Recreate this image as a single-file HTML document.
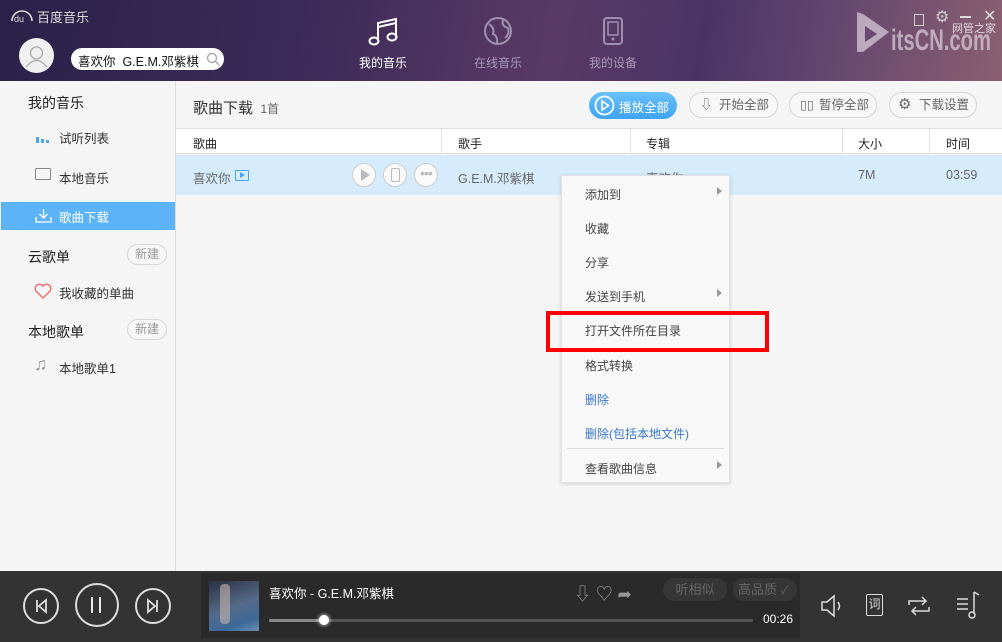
<!DOCTYPE html>
<html><head><meta charset="utf-8"><style>
*{margin:0;padding:0;box-sizing:border-box}
body{width:1002px;height:642px;overflow:hidden;font-family:"Liberation Sans","Noto Sans CJK SC",sans-serif;font-size:12px;color:#333;background:#f5f5f5;position:relative}
.abs{position:absolute}
#hdr{left:0;top:0;width:1002px;height:81px;background:linear-gradient(100deg,#2a2148 0%,#3b2a58 30%,#5a3a64 55%,#4a3466 70%,#6a4a70 85%,#8a6070 100%)}
#side{left:0;top:81px;width:176px;height:490px;background:#f5f5f5;border-right:1px solid #dcdcdc}
.t{position:absolute;white-space:nowrap}
.btn{position:absolute;height:26px;border:1px solid #d6d6d6;border-radius:13px;background:#f7f7f7;color:#666;font-size:12.5px;line-height:24px}
#bot{left:0;top:571px;width:1002px;height:71px;background:#333}
.circ{position:absolute;border:2px solid #ddd;border-radius:50%}
.mi{position:absolute;left:585px;font-size:12px;color:#444}
</style></head><body>
<div id="hdr" class="abs"></div>
<svg class="abs" style="left:9px;top:9px" width="26" height="14" viewBox="0 0 26 14"><path d="M3 12 A9 9 0 0 1 23 12" fill="none" stroke="#ddd" stroke-width="1.6"/><text x="5" y="13" font-size="9" fill="#ddd" font-family="Liberation Sans">du</text></svg>
<div class="t" style="left:37px;top:7px;color:#ddd;font-size:13px">百度音乐</div>
<div class="abs" style="left:19px;top:38px;width:35px;height:35px;border-radius:50%;background:#f0f0f0"></div>
<svg class="abs" style="left:19px;top:38px" width="35" height="35"><circle cx="17.5" cy="15" r="6" fill="none" stroke="#aaa" stroke-width="1.3"/><path d="M7 29 Q17.5 16 28 29" fill="none" stroke="#aaa" stroke-width="1.3"/></svg>
<div class="abs" style="left:71px;top:48px;width:153px;height:22px;border-radius:11px;background:#fff"></div>
<div class="t" style="left:78px;top:51px;font-size:12.5px;color:#111">喜欢你&nbsp; G.E.M.邓紫棋</div>
<svg class="abs" style="left:206px;top:52px" width="14" height="14"><circle cx="6" cy="6" r="4.5" fill="none" stroke="#aaa" stroke-width="1.4"/><path d="M9.5 9.5 L13 13" stroke="#aaa" stroke-width="1.5"/></svg>
<svg class="abs" style="left:368px;top:17px" width="32" height="30"><path d="M10 24 V6 L28 2 V20" fill="none" stroke="#fff" stroke-width="2"/><path d="M10 10 L28 6" stroke="#fff" stroke-width="2"/><ellipse cx="6" cy="24" rx="4.5" ry="3.5" fill="none" stroke="#fff" stroke-width="2"/><ellipse cx="24" cy="20" rx="4.5" ry="3.5" fill="none" stroke="#fff" stroke-width="2"/></svg>
<div class="t" style="left:359px;top:54px;color:#fff;font-size:12px">我的音乐</div>
<svg class="abs" style="left:483px;top:16px" width="30" height="30"><circle cx="15" cy="15" r="13" fill="none" stroke="#a090b0" stroke-width="2"/><path d="M6 8 Q12 12 10 18 Q15 20 14 27 M20 4 Q18 10 25 12 Q27 18 22 22" fill="none" stroke="#a090b0" stroke-width="2"/></svg>
<div class="t" style="left:474px;top:54px;color:#a898b8;font-size:12px">在线音乐</div>
<svg class="abs" style="left:603px;top:17px" width="22" height="28"><rect x="1" y="1" width="18" height="26" rx="3" fill="none" stroke="#a090b0" stroke-width="2"/><rect x="5" y="5" width="10" height="13" fill="none" stroke="#a090b0" stroke-width="1.5"/><circle cx="10" cy="22" r="1.5" fill="#a090b0"/></svg>
<div class="t" style="left:589px;top:54px;color:#a898b8;font-size:12px">我的设备</div>
<!-- watermark -->
<svg class="abs" style="left:853px;top:10px" width="140" height="46"><path d="M4 2 L4 42 L10 42 L36 22 L10 4 Z" fill="rgba(215,200,215,.75)"/><path d="M12 16 L24 24 L12 32 Z" fill="#6a4a70"/><text x="38" y="40" font-family="Liberation Sans" font-weight="bold" font-size="30" fill="rgba(215,200,215,.75)" textLength="100" lengthAdjust="spacingAndGlyphs">itsCN.com</text></svg>
<div class="t" style="left:952px;top:20px;color:#e0d8e0;font-size:11px">网管之家</div>
<div class="abs" style="left:914px;top:14px;width:10px;height:12px;border:1.2px solid #ccc"></div>
<div class="t" style="left:935px;top:7px;color:#ccc;font-size:16px">⚙</div>
<div class="abs" style="left:960px;top:16px;width:11px;height:1.5px;background:#ddd"></div>
<div class="t" style="left:983px;top:6px;color:#ddd;font-size:16px">✕</div>
<!-- sidebar -->
<div id="side" class="abs"></div>
<div class="t" style="left:28px;top:93px;font-size:14px;color:#222">我的音乐</div>
<div class="abs" style="left:36px;top:137px;width:3px;height:6px;background:#4aa6ef"></div>
<div class="abs" style="left:41px;top:139px;width:3px;height:4px;background:#4aa6ef"></div>
<div class="abs" style="left:46px;top:140px;width:3px;height:3px;background:#4aa6ef"></div>
<div class="t" style="left:59px;top:128px;font-size:12.5px">试听列表</div>
<div class="abs" style="left:35px;top:168px;width:16px;height:12px;border:1.3px solid #888;border-radius:1px"></div>
<div class="t" style="left:59px;top:168px;font-size:12.5px">本地音乐</div>
<div class="abs" style="left:1px;top:202px;width:174px;height:28px;background:#5cb3f8"></div>
<svg class="abs" style="left:35px;top:208px" width="17" height="15"><path d="M8.5 1 V10 M4.5 6 L8.5 10 L12.5 6 M1 9 V14 H16 V9" fill="none" stroke="#fff" stroke-width="1.3"/></svg>
<div class="t" style="left:59px;top:207px;font-size:12.5px;color:#fff">歌曲下载</div>
<div class="t" style="left:28px;top:247px;font-size:14px;color:#222">云歌单</div>
<div class="btn" style="left:127px;top:244px;width:40px;height:21px;line-height:19px;font-size:12px;color:#999;text-align:center">新建</div>
<svg class="abs" style="left:34px;top:283px" width="18" height="16"><path d="M9 15 L2 8 A4 4 0 0 1 9 3 A4 4 0 0 1 16 8 Z" fill="none" stroke="#ef6a6a" stroke-width="1.4"/></svg>
<div class="t" style="left:59px;top:283px;font-size:12.5px">我收藏的单曲</div>
<div class="t" style="left:28px;top:322px;font-size:14px;color:#222">本地歌单</div>
<div class="btn" style="left:127px;top:319px;width:40px;height:21px;line-height:19px;font-size:12px;color:#999;text-align:center">新建</div>
<div class="t" style="left:34px;top:354px;font-size:18px;color:#999">♫</div>
<div class="t" style="left:59px;top:358px;font-size:12.5px">本地歌单1</div>
<!-- content -->
<div class="t" style="left:193px;top:97px;font-size:15px;color:#333">歌曲下载 <span style="font-size:12px;color:#666">&nbsp;1首</span></div>
<div class="abs" style="left:589px;top:92px;width:88px;height:27px;border-radius:14px;background:linear-gradient(#6ac0fa,#3fa4f2)"></div>
<svg class="abs" style="left:594px;top:95px" width="21" height="21"><circle cx="10.5" cy="10.5" r="9" fill="none" stroke="#fff" stroke-width="1.8"/><path d="M8 6 L14.5 10.5 L8 15 Z" fill="none" stroke="#fff" stroke-width="1.6"/></svg>
<div class="t" style="left:619px;top:97px;color:#fff;font-size:12.5px">播放全部</div>
<div class="btn" style="left:689px;top:92px;width:89px"><span style="position:absolute;left:10px;top:0">⇩</span><span style="position:absolute;left:29px">开始全部</span></div>
<div class="btn" style="left:789px;top:92px;width:88px"><span style="position:absolute;left:10px;top:0">▯▯</span><span style="position:absolute;left:29px">暂停全部</span></div>
<div class="btn" style="left:889px;top:92px;width:88px"><span style="position:absolute;left:8px;top:0;font-size:15px">⚙</span><span style="position:absolute;left:29px">下载设置</span></div>
<div class="abs" style="left:176px;top:128px;width:826px;height:26px;background:#fff;border-top:1px solid #e0e0e0;border-bottom:1px solid #e0e0e0"></div>
<div class="abs" style="left:441px;top:129px;width:1px;height:24px;background:#e0e0e0"></div>
<div class="abs" style="left:630px;top:129px;width:1px;height:24px;background:#e0e0e0"></div>
<div class="abs" style="left:842px;top:129px;width:1px;height:24px;background:#e0e0e0"></div>
<div class="abs" style="left:929px;top:129px;width:1px;height:24px;background:#e0e0e0"></div>
<div class="t" style="left:193px;top:135px;color:#222">歌曲</div>
<div class="t" style="left:458px;top:135px;color:#222">歌手</div>
<div class="t" style="left:646px;top:135px;color:#222">专辑</div>
<div class="t" style="left:858px;top:135px;color:#222">大小</div>
<div class="t" style="left:946px;top:135px;color:#222">时间</div>
<div class="abs" style="left:176px;top:155px;width:826px;height:40px;background:#d6ebfb"></div>
<div class="t" style="left:193px;top:168px;color:#666;font-size:12.5px">喜欢你</div>
<div class="abs" style="left:235px;top:170px;width:14px;height:11px;border:1.3px solid #4aa6ef;border-radius:1px"></div>
<div class="abs" style="left:240px;top:172px;width:0;height:0;border-left:5px solid #4aa6ef;border-top:3px solid transparent;border-bottom:3px solid transparent"></div>
<div class="abs" style="left:352px;top:163px;width:24px;height:24px;border:1.5px solid #ccc;border-radius:50%;background:#fafafa"></div>
<div class="abs" style="left:361px;top:169px;width:0;height:0;border-left:9px solid #bbb;border-top:6px solid transparent;border-bottom:6px solid transparent"></div>
<div class="abs" style="left:383px;top:163px;width:24px;height:24px;border:1.5px solid #ccc;border-radius:50%;background:#fafafa"></div>
<div class="abs" style="left:391px;top:168px;width:9px;height:14px;border:1.3px solid #bbb;border-radius:2px"></div>
<div class="abs" style="left:414px;top:163px;width:24px;height:24px;border:1.5px solid #ccc;border-radius:50%;background:#fafafa;color:#bbb;font-size:14px;text-align:center;line-height:18px;letter-spacing:-1px">•••</div>
<div class="t" style="left:458px;top:168px;color:#666;font-size:12.5px">G.E.M.邓紫棋</div>
<div class="t" style="left:646px;top:168px;color:#666;font-size:12.5px">喜欢你</div>
<div class="t" style="left:858px;top:168px;color:#666;font-size:12.5px">7M</div>
<div class="t" style="left:946px;top:168px;color:#666;font-size:12.5px">03:59</div>
<!-- context menu -->
<div class="abs" style="left:561px;top:175px;width:169px;height:308px;background:#f8f8f8;border:1px solid #e2e2e2;box-shadow:0 1px 4px rgba(0,0,0,.15)"></div>
<div class="mi" style="top:186px">添加到</div>
<div class="mi" style="top:220px">收藏</div>
<div class="mi" style="top:254px">分享</div>
<div class="mi" style="top:288px">发送到手机</div>
<div class="mi" style="top:322px">打开文件所在目录</div>
<div class="mi" style="top:357px">格式转换</div>
<div class="mi" style="top:391px;color:#3b78c8">删除</div>
<div class="mi" style="top:425px;color:#3b78c8">删除(包括本地文件)</div>
<div class="abs" style="left:567px;top:448px;width:157px;height:1px;background:#ddd"></div>
<div class="mi" style="top:460px">查看歌曲信息</div>
<div class="abs" style="left:717px;top:187px;border-left:5px solid #999;border-top:4px solid transparent;border-bottom:4px solid transparent"></div>
<div class="abs" style="left:717px;top:289px;border-left:5px solid #999;border-top:4px solid transparent;border-bottom:4px solid transparent"></div>
<div class="abs" style="left:717px;top:461px;border-left:5px solid #999;border-top:4px solid transparent;border-bottom:4px solid transparent"></div>
<div class="abs" style="left:546px;top:311px;width:223px;height:41px;border:4px solid #f00"></div>
<!-- bottom -->
<div id="bot" class="abs"></div>
<div class="circ" style="left:23px;top:588px;width:36px;height:36px"></div>
<svg class="abs" style="left:23px;top:588px" width="36" height="36"><path d="M14 12 V24 M23 12 L16 18 L23 24 Z" fill="none" stroke="#ddd" stroke-width="1.8"/></svg>
<div class="circ" style="left:75px;top:583px;width:44px;height:44px"></div>
<div class="abs" style="left:91px;top:597px;width:2px;height:16px;background:#eee"></div>
<div class="abs" style="left:99px;top:597px;width:2px;height:16px;background:#eee"></div>
<div class="circ" style="left:135px;top:588px;width:36px;height:36px"></div>
<svg class="abs" style="left:135px;top:588px" width="36" height="36"><path d="M22 12 V24 M13 12 L20 18 L13 24 Z" fill="none" stroke="#ddd" stroke-width="1.8"/></svg>
<div class="abs" style="left:201px;top:573px;width:599px;height:65px;background:#2a2a2a"></div>
<div class="abs" style="left:209px;top:581px;width:50px;height:50px;background:linear-gradient(160deg,#2a3040 0%,#556a88 50%,#3d6a9a 80%,#6a90b0 100%)"></div>
<div class="abs" style="left:220px;top:584px;width:10px;height:40px;background:#c8b8b0;border-radius:4px;opacity:.6"></div>
<div class="t" style="left:269px;top:583px;color:#fff;font-size:12.5px">喜欢你 - G.E.M.邓紫棋</div>
<div class="t" style="left:574px;top:580px;color:#999;font-size:17px">⇩ ♡ ➦</div>
<div class="abs" style="left:663px;top:578px;width:64px;height:23px;border-radius:11px;background:#363636;color:#666;font-size:13px;line-height:23px;text-align:center">听相似</div>
<div class="abs" style="left:733px;top:578px;width:64px;height:23px;border-radius:11px;background:#363636;color:#666;font-size:13px;line-height:23px;padding-left:5px">高品质 <span style="font-size:11px">✓</span></div>
<div class="abs" style="left:269px;top:619px;width:484px;height:3px;border-radius:2px;background:#555"></div>
<div class="abs" style="left:269px;top:619px;width:55px;height:3px;border-radius:2px;background:#888"></div>
<div class="abs" style="left:319px;top:615px;width:10px;height:10px;border-radius:50%;background:#fff;box-shadow:0 0 4px #fff"></div>
<div class="t" style="left:763px;top:612px;color:#fff;font-size:12px">00:26</div>
<svg class="abs" style="left:820px;top:593px" width="24" height="26"><path d="M2 9 H7 L14 3 V23 L7 17 H2 Z M18 9 Q21 13 18 17" fill="none" stroke="#ddd" stroke-width="1.5"/></svg>
<div class="abs" style="left:866px;top:594px;width:17px;height:22px;border:1.5px solid #ddd;border-radius:2px;color:#ddd;font-size:12px;line-height:19px;text-align:center">词</div>
<svg class="abs" style="left:906px;top:595px" width="26" height="22"><path d="M3 10 V6 H20 M16 2 L20 6 L16 10 M23 12 V16 H6 M10 20 L6 16 L10 12" fill="none" stroke="#ddd" stroke-width="1.5"/></svg>
<svg class="abs" style="left:956px;top:590px" width="26" height="30"><path d="M1 9 H12 M1 14 H12 M1 19 H12 M18 2 V24 M18 2 L23 5" fill="none" stroke="#ddd" stroke-width="1.5"/><circle cx="16" cy="25" r="3" fill="none" stroke="#ddd" stroke-width="1.5"/></svg>
</body></html>
